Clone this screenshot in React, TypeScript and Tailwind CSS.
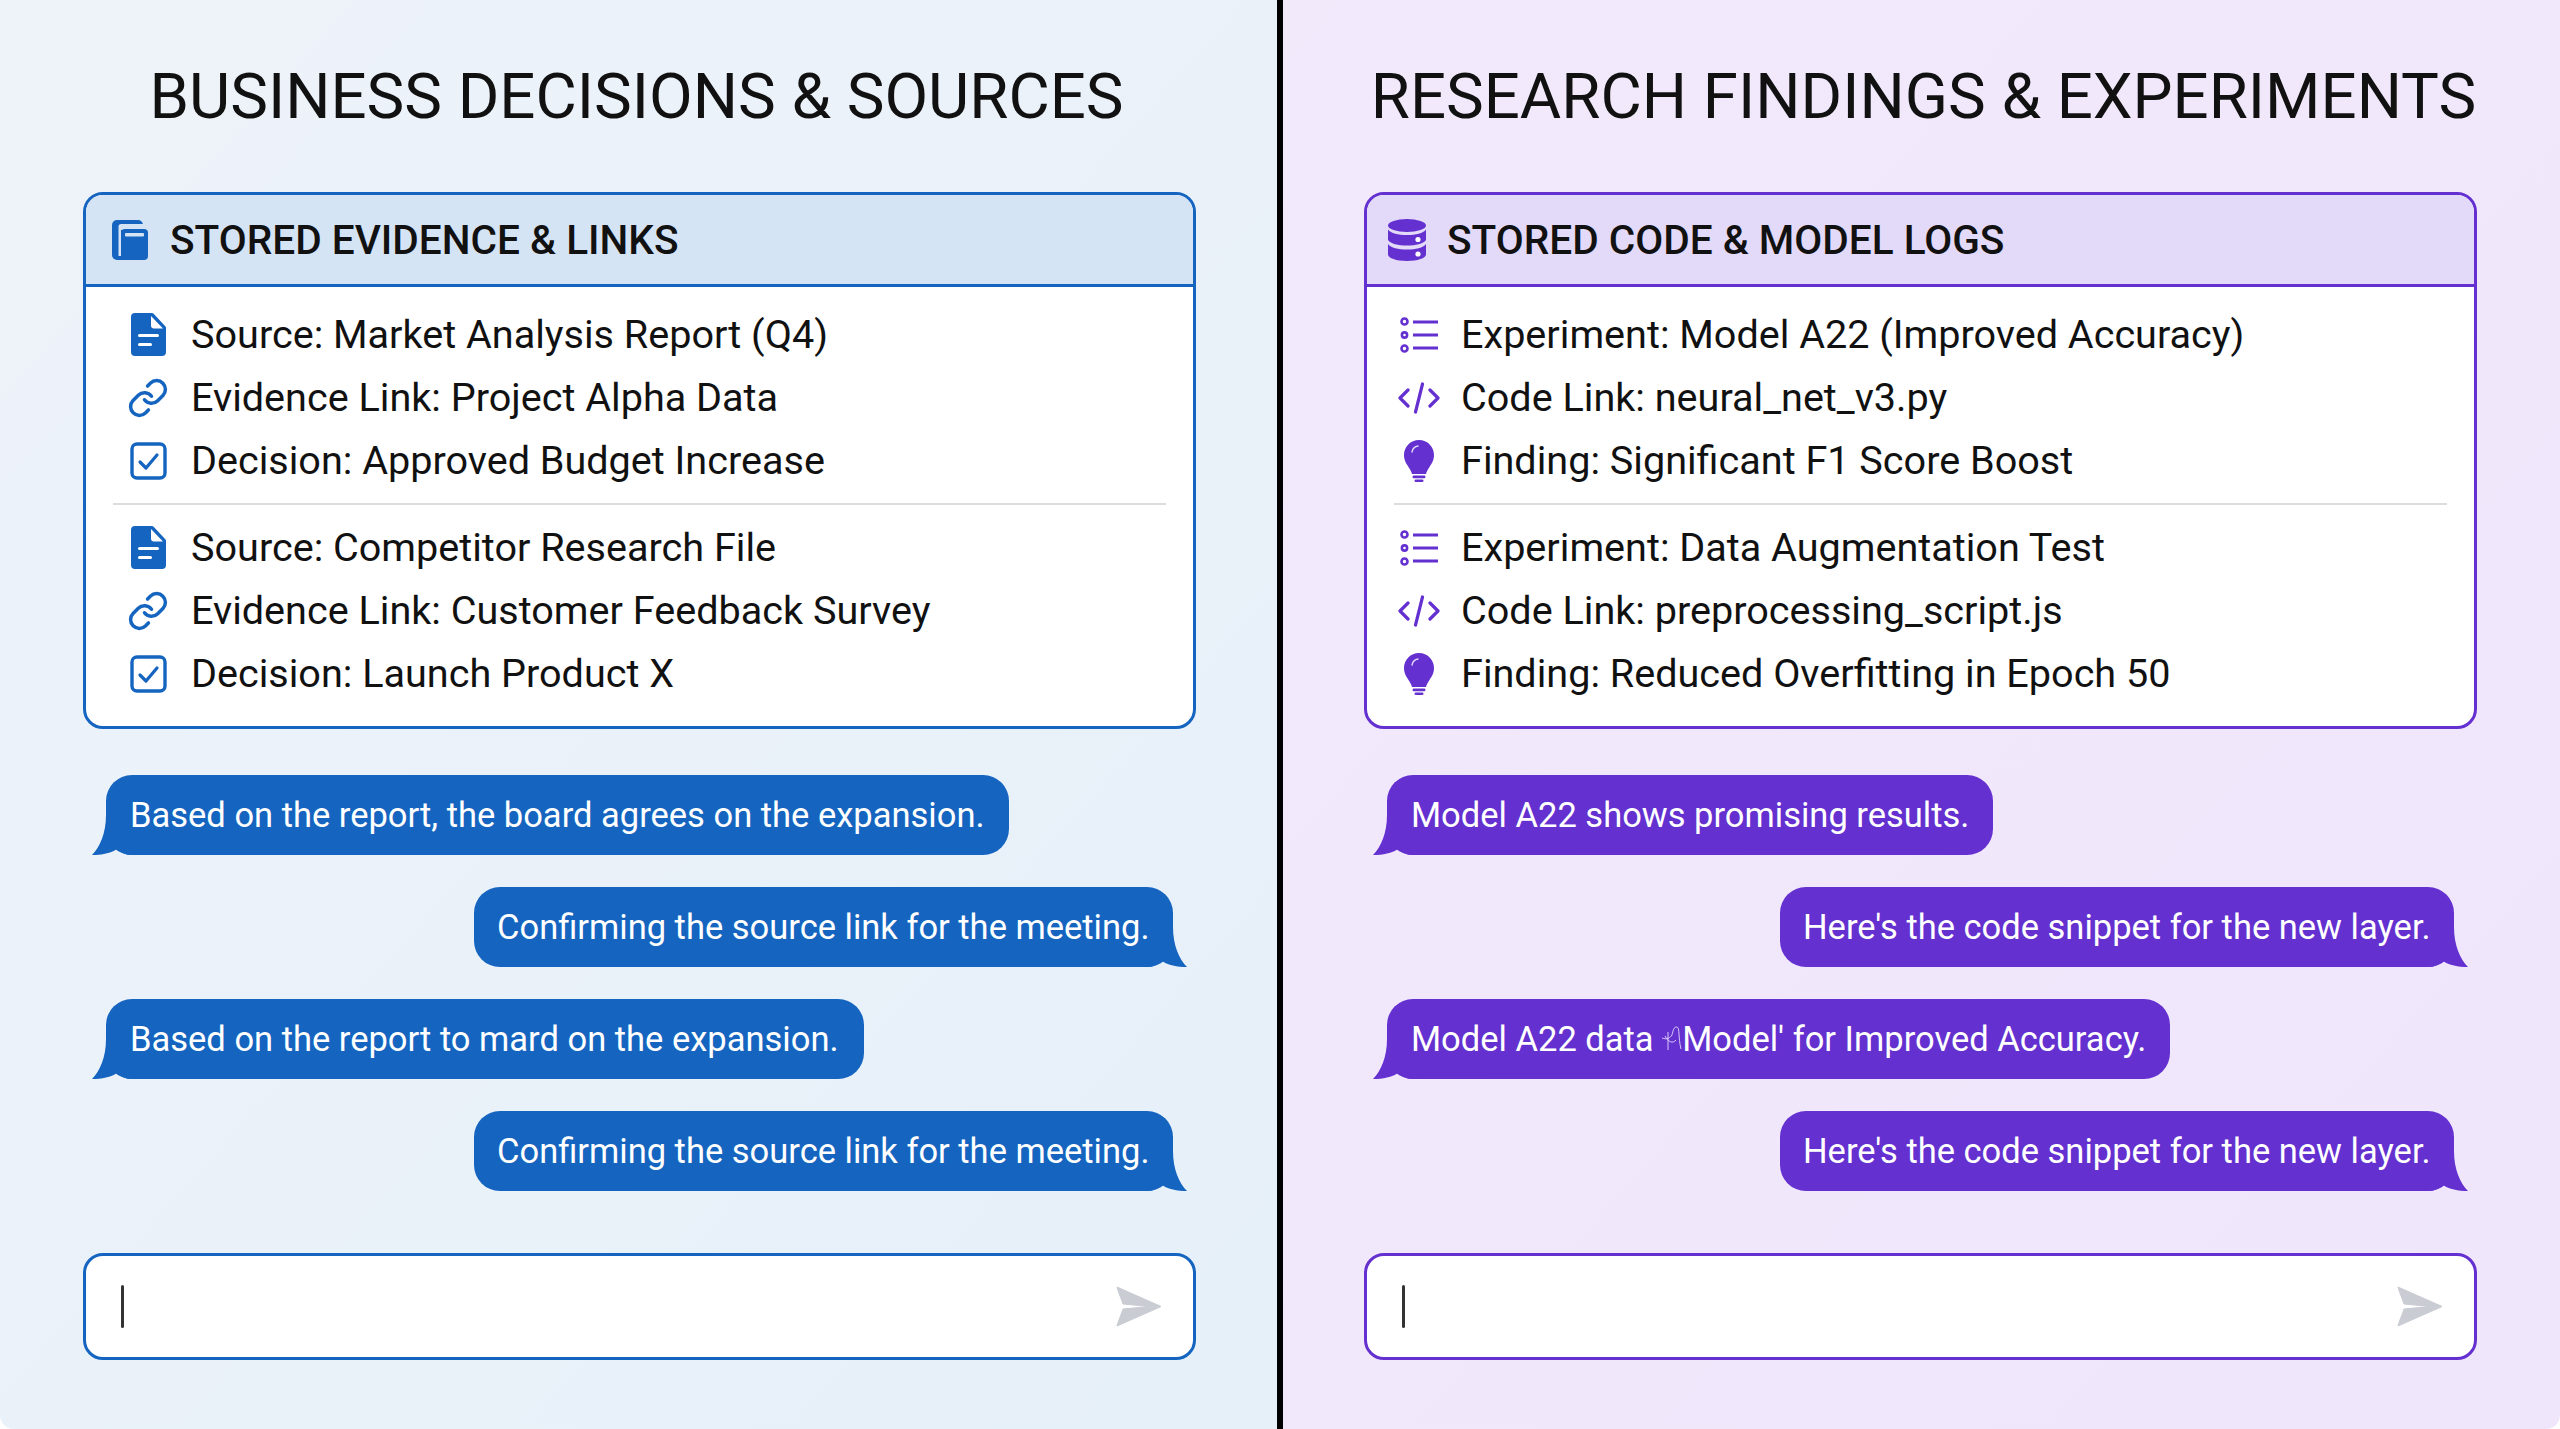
import React from 'react';

const font = { fontFamily: 'Roboto, sans-serif' };

const DocIcon = () => (
  <svg viewBox="0 0 35 43" className="w-[35px] h-[43px]">
    <path fill="currentColor" d="M4 0h17a2 2 0 0 1 1.4.6l11.9 12.6a2 2 0 0 1 .7 1.5V39a4 4 0 0 1-4 4H4a4 4 0 0 1-4-4V4a4 4 0 0 1 4-4z" />
    <path fill="#fff" d="M20 3l12 12.5h-9a3 3 0 0 1-3-3z" />
    <rect x="7" y="21" width="21" height="3" rx="1.5" fill="#fff" />
    <rect x="7" y="30" width="14" height="3" rx="1.5" fill="#fff" />
  </svg>
);

const LinkIcon = () => (
  <svg viewBox="0 0 24 24" fill="none" stroke="currentColor" strokeWidth="2" strokeLinecap="round" strokeLinejoin="round" className="w-[42px] h-[42px]">
    <path d="M10 13a5 5 0 0 0 7.54.54l3-3a5 5 0 0 0-7.07-7.07l-1.72 1.71" />
    <path d="M14 11a5 5 0 0 0-7.54-.54l-3 3a5 5 0 0 0 7.07 7.07l1.71-1.71" />
  </svg>
);

const CheckIcon = () => (
  <svg viewBox="0 0 37 38" fill="none" stroke="currentColor" className="w-[37px] h-[38px]">
    <rect x="2" y="2" width="33" height="34" rx="5" strokeWidth="3.4" />
    <path d="M10 20l6 6 11-13" strokeWidth="3.2" strokeLinecap="round" strokeLinejoin="round" />
  </svg>
);

const ListIcon = () => (
  <svg viewBox="0 0 38 36" fill="none" stroke="currentColor" strokeWidth="2.6" className="w-[38px] h-[36px]">
    <circle cx="4.5" cy="4.5" r="3" />
    <circle cx="4.5" cy="18" r="2.6" />
    <circle cx="4.5" cy="31.5" r="3" />
    <path d="M13 5h25M13 18h25M13 31h25" strokeWidth="3" />
  </svg>
);

const CodeIcon = () => (
  <svg viewBox="0 0 42 32" fill="none" stroke="currentColor" strokeWidth="3.2" strokeLinecap="round" strokeLinejoin="round" className="w-[42px] h-[32px]">
    <path d="M10 8L2 16l8 8M32 8l8 8-8 8M24.5 2l-7 28" />
  </svg>
);

const BulbIcon = () => (
  <svg viewBox="0 0 30 42" className="w-[30px] h-[42px]">
    <path fill="currentColor" d="M15 0C6.5 0 0 6.8 0 15c0 5.6 2.6 9 4.8 12.4 1.6 2.5 2.8 4.6 3.2 6.6h14c.4-2 1.6-4.1 3.2-6.6C27.4 24 30 20.6 30 15 30 6.8 23.5 0 15 0z" />
    <path fill="none" stroke="#fff" strokeWidth="1.4" strokeLinecap="round" d="M8 12c.6-3 3-5.5 6-6" opacity="0.8" />
    <rect x="8.5" y="35.5" width="13" height="2.8" rx="1.4" fill="currentColor" />
    <rect x="10.5" y="39.4" width="9" height="2.6" rx="1.3" fill="currentColor" />
  </svg>
);

const FolderIcon = () => (
  <svg viewBox="0 0 36 40" className="w-[36px] h-[40px]">
    <rect x="0" y="0" width="31" height="40" rx="5" fill="currentColor" />
    <path fill="#d5e4f5" d="M9 4h22v6H6.500V6.500A2.500 2.500 0 0 1 9 4zM6.500 10H9v26H6.500z" />
    <rect x="9" y="9" width="27" height="31" rx="4" fill="currentColor" />
    <rect x="13" y="13" width="19" height="3.500" rx="1" fill="#d5e4f5" />
  </svg>
);

const DatabaseIcon = () => (
  <svg viewBox="0 0 38 42" className="w-[38px] h-[42px]">
    <ellipse cx="19" cy="6.5" rx="19" ry="6.5" fill="currentColor" />
    <path fill="currentColor" d="M0 10.5C3 14.5 10 16 19 16s16-1.5 19-5.5V21c-3 4-10 5.5-19 5.500S3 25 0 21z" />
    <path fill="currentColor" d="M0 25c3 4 10 5.500 19 5.500S35 29 38 25v10.500C38 39.100 29.500 42 19 42S0 39.100 0 35.500z" />
    <circle cx="30" cy="20.5" r="2.6" fill="#fff" />
    <circle cx="30" cy="35" r="2.6" fill="#fff" />
  </svg>
);

const SendIcon = () => (
  <svg viewBox="0 0 45 41" fill="#c9ccd3" stroke="#c9ccd3" strokeWidth="1" strokeLinejoin="round" className="w-[45px] h-[41px]">
    <path d="M1 1l43.500 19.200H30L7 18C5.500 13 2.500 7 1 1z" />
    <path d="M1 40l43.500-19.200H30L7 23C5.500 28 2.500 34 1 40z" />
  </svg>
);

// tail sits over the bubble's bottom corner
const Tail = ({ side, color }: { side: 'left' | 'right'; color: string }) => (
  <svg
    viewBox="0 0 40 40"
    fill="currentColor"
    className={`absolute bottom-0 w-[40px] h-[40px] ${color} ${side === 'left' ? 'left-[-14px]' : 'right-[-14px] -scale-x-100'}`}
  >
    <path d="M14 0C14 18 8 32 0 40c10 0 19-2 25-6 4 4 9 6 15 6V0z" />
  </svg>
);

const Squiggle = () => (
  <svg viewBox="0 0 20 30" fill="none" stroke="#d9c8f7" strokeWidth="1" className="inline-block w-[20px] h-[30px] align-[-3px]">
    <path d="M0 14c5 2 8 0 10-3 1-4 2-9 5-8s1 10 4 22M6 8v18M3 12c3 6 8 8 11 4" />
  </svg>
);

type Row = { icon: React.ReactNode; text: string };

const Bubble = ({ side, width, bg, tail, children }: { side: 'left' | 'right'; width: string; bg: string; tail: string; children: React.ReactNode }) => (
  <div className={`relative h-[80px] flex items-center rounded-[26px] pt-[2px] text-[34.5px] text-white whitespace-nowrap ${width} ${bg} ${side === 'left' ? 'self-start pl-[24px]' : 'self-end pl-[23px]'}`}>
    <Tail side={side} color={tail} />
    <span className="relative">{children}</span>
  </div>
);

const blueTop: Row[] = [
  { icon: <DocIcon />, text: 'Source: Market Analysis Report (Q4)' },
  { icon: <LinkIcon />, text: 'Evidence Link: Project Alpha Data' },
  { icon: <CheckIcon />, text: 'Decision: Approved Budget Increase' },
];
const blueBottom: Row[] = [
  { icon: <DocIcon />, text: 'Source: Competitor Research File' },
  { icon: <LinkIcon />, text: 'Evidence Link: Customer Feedback Survey' },
  { icon: <CheckIcon />, text: 'Decision: Launch Product X' },
];
const purpleTop: Row[] = [
  { icon: <ListIcon />, text: 'Experiment: Model A22 (Improved Accuracy)' },
  { icon: <CodeIcon />, text: 'Code Link: neural_net_v3.py' },
  { icon: <BulbIcon />, text: 'Finding: Significant F1 Score Boost' },
];
const purpleBottom: Row[] = [
  { icon: <ListIcon />, text: 'Experiment: Data Augmentation Test' },
  { icon: <CodeIcon />, text: 'Code Link: preprocessing_script.js' },
  { icon: <BulbIcon />, text: 'Finding: Reduced Overfitting in Epoch 50' },
];

const Rows = ({ rows, iconClass }: { rows: Row[]; iconClass: string }) => (
  <div className="flex flex-col">
    {rows.map((r) => (
      <div key={r.text} className="h-[63px] flex items-center whitespace-nowrap">
        <div className={`flex items-center justify-center shrink-0 ${iconClass}`}>{r.icon}</div>
        <span className="text-[39.6px] text-[#111]">{r.text}</span>
      </div>
    ))}
  </div>
);

const Input = ({ border }: { border: string }) => (
  <div className={`mt-[62px] h-[107px] rounded-[20px] border-[3px] bg-white flex items-center justify-between pl-[35px] pr-[32px] ${border}`}>
    <div className="w-[3px] h-[43px] bg-[#333] rounded-full" />
    <SendIcon />
  </div>
);

export default function App() {
  return (
    <div className="w-[2560px] h-[1429px] bg-white flex overflow-hidden" style={font}>
      {/* business */}
      <div className="w-[1277px] h-full rounded-bl-[14px] bg-linear-to-br from-[#eef3f9] to-[#e6f0f9] pl-[83px] pr-[81px] text-[#1565c0] flex flex-col">
        <div className="h-[192px] pt-[2px] flex items-center justify-center">
          <h1 className="text-[63.5px] text-[#111] whitespace-nowrap -translate-x-[3px]">BUSINESS DECISIONS &amp; SOURCES</h1>
        </div>
        <div className="h-[537px] rounded-[20px] border-[3px] border-[#1565c0] bg-white overflow-hidden">
          <div className="h-[92px] bg-[#d5e4f5] border-b-[3px] border-[#1565c0] flex items-center pl-[26px] gap-[22px]">
            <FolderIcon />
            <div className="pt-[1px] text-[40.6px] font-medium text-[#111]">STORED EVIDENCE &amp; LINKS</div>
          </div>
          <div className="pt-[16px] px-[27px]">
            <Rows rows={blueTop} iconClass="w-[52px] mr-[17px] ml-[9px]" />
            <div className="h-[2px] bg-[#ddd] my-[11px]" />
            <Rows rows={blueBottom} iconClass="w-[52px] mr-[17px] ml-[9px]" />
          </div>
        </div>
        <div className="mt-[46px] flex flex-col gap-[32px] pl-[23px] pr-[23px]">
          <Bubble side="left" width="w-[903px]" bg="bg-[#1565c0]" tail="text-[#1565c0]">Based on the report, the board agrees on the expansion.</Bubble>
          <Bubble side="right" width="w-[699px]" bg="bg-[#1565c0]" tail="text-[#1565c0]">Confirming the source link for the meeting.</Bubble>
          <Bubble side="left" width="w-[758px]" bg="bg-[#1565c0]" tail="text-[#1565c0]">Based on the report to mard on the expansion.</Bubble>
          <Bubble side="right" width="w-[699px]" bg="bg-[#1565c0]" tail="text-[#1565c0]">Confirming the source link for the meeting.</Bubble>
        </div>
        <Input border="border-[#1565c0]" />
      </div>

      <div className="w-[6px] h-full bg-black shrink-0" />

      {/* research */}
      <div className="w-[1277px] h-full rounded-br-[14px] bg-linear-to-br from-[#f2e9fb] to-[#f0e6fc] pl-[81px] pr-[83px] text-[#6430d0] flex flex-col">
        <div className="h-[192px] pt-[2px] flex items-center justify-center">
          <h1 className="text-[63.5px] text-[#111] whitespace-nowrap translate-x-[3px]">RESEARCH FINDINGS &amp; EXPERIMENTS</h1>
        </div>
        <div className="h-[537px] rounded-[20px] border-[3px] border-[#6430d0] bg-white overflow-hidden">
          <div className="h-[92px] bg-[#e3d9f8] border-b-[3px] border-[#6430d0] flex items-center pl-[21px] gap-[21px]">
            <DatabaseIcon />
            <div className="pt-[1px] text-[40.6px] font-medium text-[#111]">STORED CODE &amp; MODEL LOGS</div>
          </div>
          <div className="pt-[16px] px-[27px]">
            <Rows rows={purpleTop} iconClass="w-[46px] mr-[19px] ml-[2px]" />
            <div className="h-[2px] bg-[#ddd] my-[11px]" />
            <Rows rows={purpleBottom} iconClass="w-[46px] mr-[19px] ml-[2px]" />
          </div>
        </div>
        <div className="mt-[46px] flex flex-col gap-[32px] pl-[23px] pr-[23px]">
          <Bubble side="left" width="w-[606px]" bg="bg-[#6430d0]" tail="text-[#6430d0]">Model A22 shows promising results.</Bubble>
          <Bubble side="right" width="w-[674px]" bg="bg-[#6430d0]" tail="text-[#6430d0]">Here's the code snippet for the new layer.</Bubble>
          <Bubble side="left" width="w-[783px]" bg="bg-[#6430d0]" tail="text-[#6430d0]">Model A22 data <Squiggle />Model' for Improved Accuracy.</Bubble>
          <Bubble side="right" width="w-[674px]" bg="bg-[#6430d0]" tail="text-[#6430d0]">Here's the code snippet for the new layer.</Bubble>
        </div>
        <Input border="border-[#6430d0]" />
      </div>
    </div>
  );
}
